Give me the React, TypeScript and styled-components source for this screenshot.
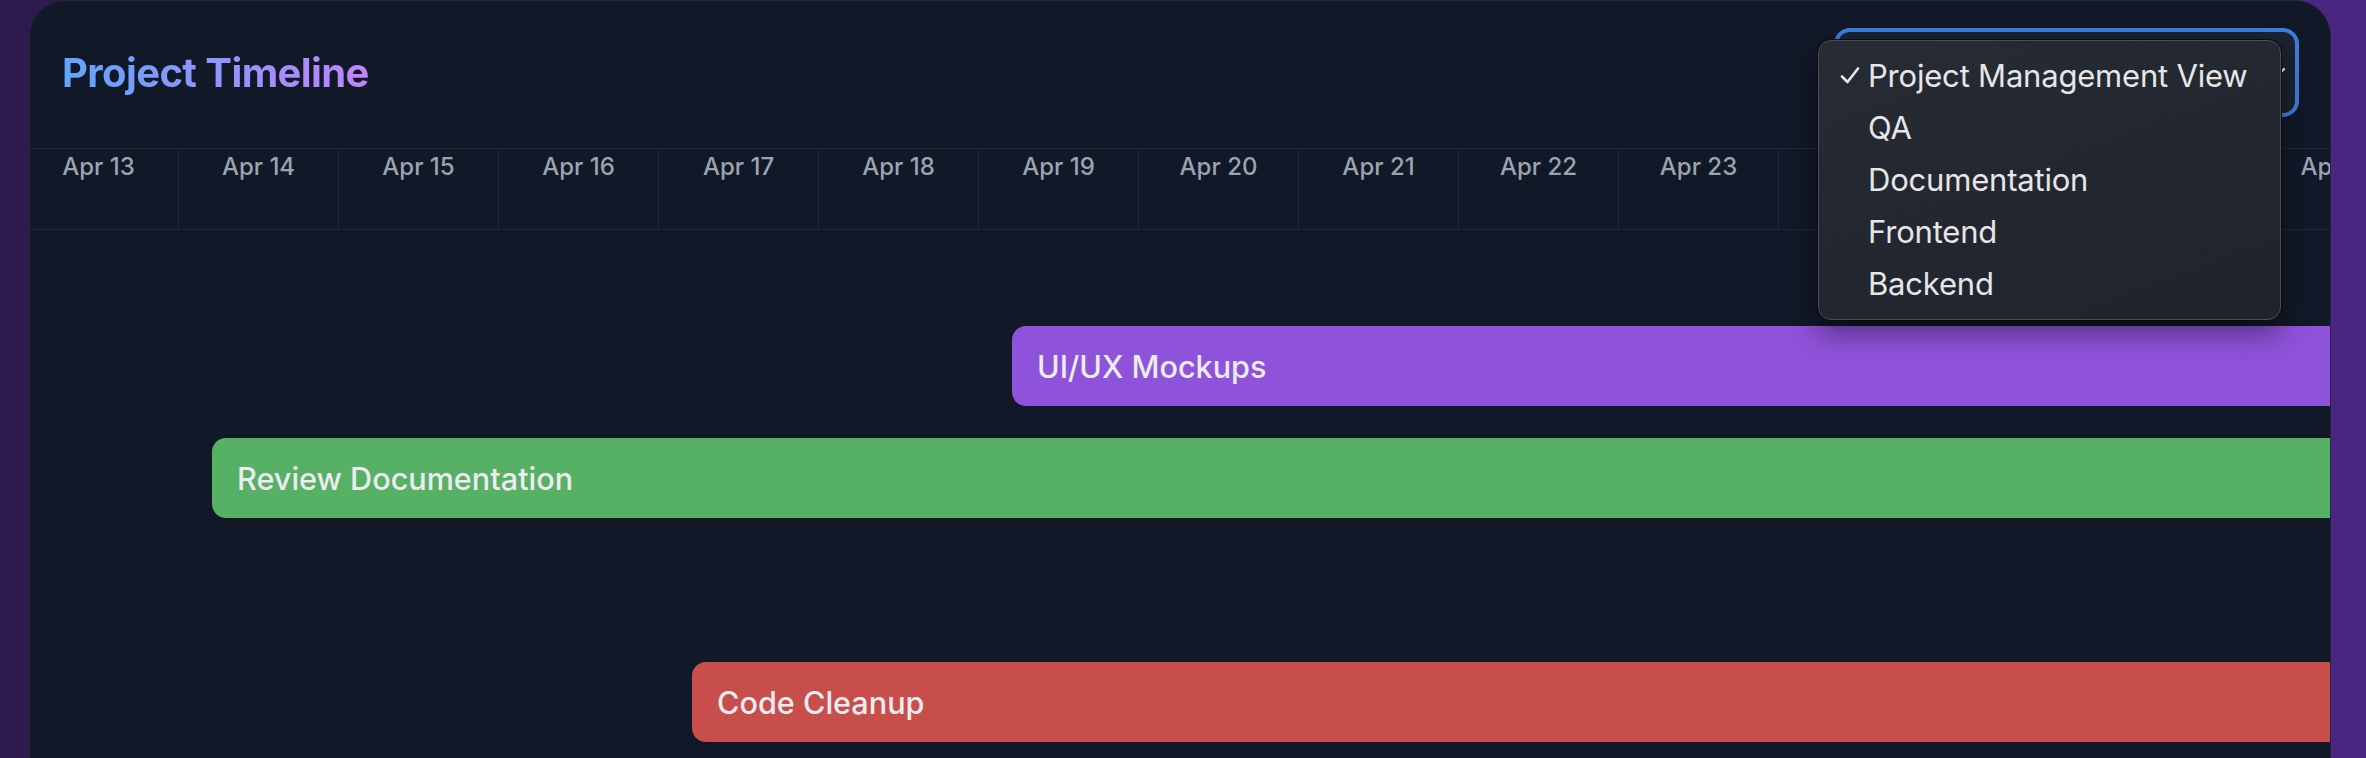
import React from 'react';
import styled, { createGlobalStyle } from 'styled-components';

const GlobalStyle = createGlobalStyle`
  html, body {
    margin: 0;
    padding: 0;
    height: 100%;
    overflow: hidden;
  }
  body {
    background: linear-gradient(90deg, #2f1a4e 0%, #3d2068 50%, #4b2582 100%);
    font-family: Inter, "Noto Sans", "Liberation Sans", sans-serif;
  }
`;

const Shell = styled.div`
  padding-left: 29px;
`;

const Card = styled.div`
  width: 2302px;
  height: 820px;
  box-sizing: border-box;
  background: #111827;
  border: 1px solid #1f2937;
  border-radius: 36px;
  overflow: hidden;
  display: flex;
  flex-direction: column;
`;

const Header = styled.div`
  display: flex;
  justify-content: space-between;
  align-items: center;
  padding: 27px 31px 31px 32px;
  border-bottom: 1px solid #1f2937;
`;

const Title = styled.h1`
  margin: 0;
  font-size: 40px;
  font-weight: 700;
  letter-spacing: -0.6px;
  line-height: 1.2;
  background: linear-gradient(90deg, #60a5fa, #c084fc);
  -webkit-background-clip: text;
  background-clip: text;
  color: transparent;
`;

const SelectWrap = styled.div`
  position: relative;
`;

const SelectBox = styled.div`
  width: 465px;
  height: 89px;
  box-sizing: border-box;
  border: 4px solid #3d7ddf;
  border-radius: 16px;
  background: #1c2230;
  display: flex;
  align-items: center;
  justify-content: flex-end;
  padding-right: 8px;
`;

const Menu = styled.div`
  position: absolute;
  left: -16px;
  top: 12px;
  width: 463px;
  box-sizing: border-box;
  padding: 8px 0 10px;
  border-radius: 13px;
  border: 1px solid #4a4d56;
  background: linear-gradient(160deg, #272b34 0%, #1f232b 100%);
  box-shadow: 0 0 0 1px #0a0c10, 0 12px 30px rgba(0, 0, 0, 0.45);
`;

const MenuItem = styled.div`
  display: flex;
  align-items: center;
  height: 52px;
  padding-left: 21px;
  font-size: 31px;
  color: #e6e6e8;
  letter-spacing: -0.2px;
`;

const CheckSlot = styled.span`
  width: 28px;
  display: flex;
  align-items: center;
`;

const Timeline = styled.div`
  flex: 1;
  overflow: hidden;
`;

const Track = styled.div`
  margin-left: -11px;
  width: max-content;
`;

const DateRow = styled.div`
  display: flex;
  border-bottom: 1px solid #1f2937;
`;

const DateCell = styled.div`
  flex: 0 0 160px;
  height: 80px;
  box-sizing: border-box;
  padding-top: 3px;
  border-right: 1px solid #1f2937;
  text-align: center;
  font-size: 24px;
  font-weight: 500;
  line-height: 30px;
  color: #9ca3af;
`;

const Body = styled.div`
  display: flex;
  flex-direction: column;
  gap: 32px;
  padding-top: 96px;
`;

const Row = styled.div`
  height: 80px;
  display: flex;
`;

const Bar = styled.div<{ $color: string }>`
  height: 80px;
  box-sizing: border-box;
  border-radius: 14px;
  background: ${(p) => p.$color};
  padding-left: 25px;
  display: flex;
  align-items: center;
  font-size: 30.6px;
  font-weight: 500;
  color: #ececf1;
  white-space: nowrap;
`;

const CELL = 160;

const days = Array.from({ length: 20 }, (_, i) => `Apr ${13 + i}`);

type Task = { name: string; start: number; length: number; color: string };

const rows: (Task | null)[] = [
  { name: 'UI/UX Mockups', start: 6, length: 12, color: '#8f52da' },
  { name: 'Review Documentation', start: 1, length: 16, color: '#57b164' },
  null,
  { name: 'Code Cleanup', start: 4, length: 14, color: '#c84e4b' },
];

const views = ['Project Management View', 'QA', 'Documentation', 'Frontend', 'Backend'];

const Check = () => (
  <svg width="20" height="17" viewBox="0 0 20 17" fill="none">
    <path d="M2 9.5 L7.5 15 L18 1.5" stroke="#e6e6e8" strokeWidth="2.6" strokeLinecap="round" strokeLinejoin="round" />
  </svg>
);

const Chevron = () => (
  <svg width="20" height="12" viewBox="0 0 20 12" fill="none">
    <path d="M3 2 L10 9 L17 2" stroke="#e6e6e8" strokeWidth="2.4" strokeLinecap="round" strokeLinejoin="round" />
  </svg>
);

const App: React.FC = () => {
  return (
    <Shell>
      <GlobalStyle />
      <Card>
        <Header>
          <Title>Project Timeline</Title>
          <SelectWrap>
            <SelectBox>
              <Chevron />
            </SelectBox>
            <Menu>
              {views.map((v, i) => (
                <MenuItem key={v}>
                  <CheckSlot>{i === 0 && <Check />}</CheckSlot>
                  {v}
                </MenuItem>
              ))}
            </Menu>
          </SelectWrap>
        </Header>
        <Timeline>
          <Track>
            <DateRow>
              {days.map((d) => (
                <DateCell key={d}>{d}</DateCell>
              ))}
            </DateRow>
            <Body>
              {rows.map((t, i) => (
                <Row key={i}>
                  {t && (
                    <Bar
                      $color={t.color}
                      style={{ marginLeft: t.start * CELL + 33, width: t.length * CELL }}
                    >
                      {t.name}
                    </Bar>
                  )}
                </Row>
              ))}
            </Body>
          </Track>
        </Timeline>
      </Card>
    </Shell>
  );
};

export default App;
